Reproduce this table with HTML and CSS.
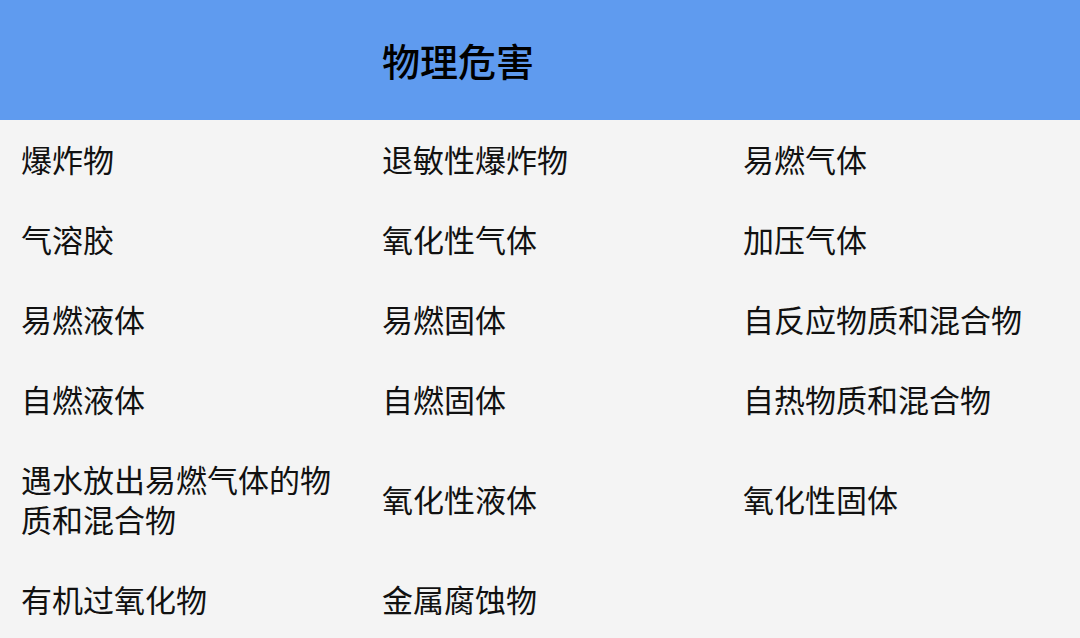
FILE: index.html
```html
<!DOCTYPE html>
<html lang="zh-CN">
<head>
<meta charset="utf-8">
<title>物理危害</title>
<link rel="stylesheet" href="styles.css">
</head>
<body>
<header class="head">
  <div class="head-spacer"></div>
  <h1 class="title">物理危害</h1>
</header>
<main class="grid">
  <div class="cell">爆炸物</div>
  <div class="cell">退敏性爆炸物</div>
  <div class="cell">易燃气体</div>

  <div class="cell">气溶胶</div>
  <div class="cell">氧化性气体</div>
  <div class="cell">加压气体</div>

  <div class="cell">易燃液体</div>
  <div class="cell">易燃固体</div>
  <div class="cell">自反应物质和混合物</div>

  <div class="cell">自燃液体</div>
  <div class="cell">自燃固体</div>
  <div class="cell">自热物质和混合物</div>

  <div class="cell">遇水放出易燃气体的物质和混合物</div>
  <div class="cell">氧化性液体</div>
  <div class="cell">氧化性固体</div>

  <div class="cell">有机过氧化物</div>
  <div class="cell">金属腐蚀物</div>
  <div class="cell"></div>
</main>
</body>
</html>
```
FILE: styles.css
```css
* { box-sizing: border-box; }
html, body {
  margin: 0;
  padding: 0;
}
body {
  width: 1080px;
  height: 638px;
  overflow: hidden;
  background: #f4f4f4;
  font-family: "Noto Sans CJK SC", "Noto Sans", sans-serif;
  color: #111;
}
.head {
  height: 120px;
  background: #5f9bef;
  display: grid;
  grid-template-columns: 361px 1fr;
  align-items: center;
}
.title {
  margin: 0;
  padding-left: 21px;
  font-size: 38px;
  font-weight: 500;
  line-height: 1;
  color: #000;
}
.grid {
  display: grid;
  grid-template-columns: 361px 361px 358px;
  grid-template-rows: repeat(4, 80px) 120px 80px;
}
.cell {
  display: flex;
  align-items: center;
  padding-left: 21px;
  padding-right: 20px;
  padding-bottom: 2px;
  font-size: 31px;
  line-height: 40px;
}
```
